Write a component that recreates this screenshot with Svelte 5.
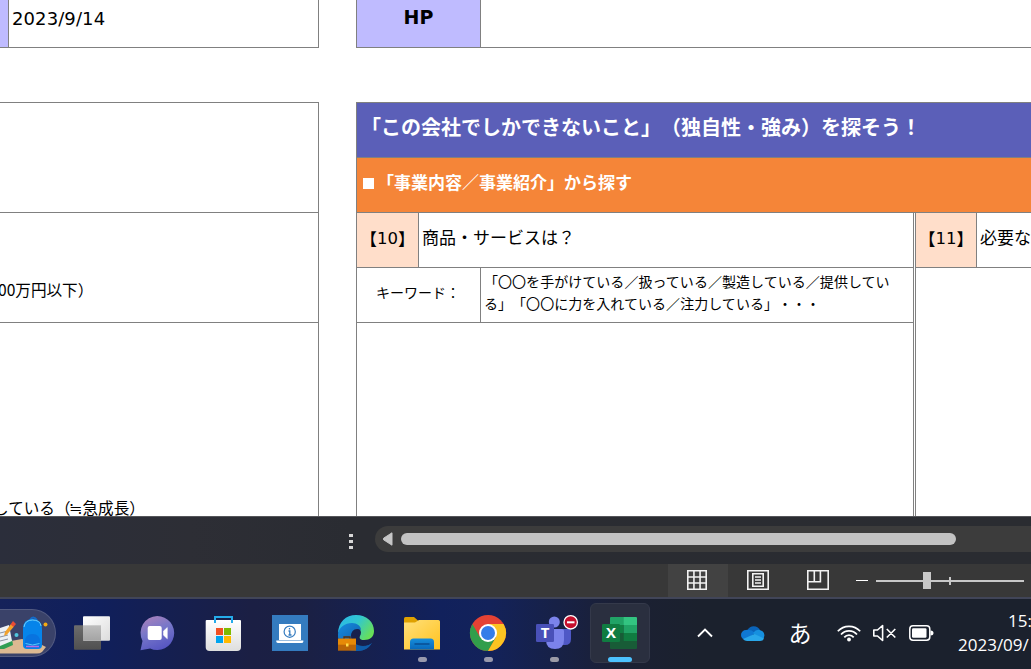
<script>
  const grid = [0, 1, 2, 3];
</script>

<div class="screen">
  <main class="sheet">
    <section class="left">
      <div class="date-row"><span class="swatch"></span><span class="date">2023/9/14</span></div>
      <div class="facts">
        <div class="fact short"></div>
        <div class="fact short"><span class="capital">00万円以下）</span></div>
        <div class="fact tall"><span class="growth">している（<i>≒</i>急成長）</span></div>
      </div>
    </section>
    <section class="right">
      <div class="hp-row"><b>HP</b></div>
      <div class="board">
        <h1>「この会社でしかできないこと」（独自性・強み）を探そう！</h1>
        <h2><span class="square"></span>「事業内容／事業紹介」から探す</h2>
        <div class="questions">
          <div class="question first">
            <div class="head"><span class="num">【<em>10</em>】</span><span class="ask">商品・サービスは？</span></div>
            <div class="keywords">
              <span class="label">キーワード：</span>
              <p>「〇〇を手がけている／扱っている／製造している／提供してい<br />る」「〇〇に力を入れている／注力している」・・・</p>
            </div>
          </div>
          <div class="question second">
            <div class="head"><span class="num">【<em>11</em>】</span><span class="ask">必要な</span></div>
          </div>
        </div>
      </div>
    </section>
  </main>

  <div class="scroll-strip">
    <span class="dots"><i></i><i></i><i></i></span>
    <div class="track">
      <svg width="10" height="14" viewBox="0 0 10 14"><path d="M9 .8v12.4L.6 7.8q-.8-.8 0-1.6z" fill="#c6c6c6" stroke="#c6c6c6" stroke-linejoin="round" /></svg>
      <span class="thumb"></span>
    </div>
  </div>

  <div class="status">
    <span class="view active">
      <svg width="20" height="20" viewBox="0 0 20 20" fill="none" stroke="#f2f2f2" stroke-width="1.600">
        {#each grid as n}
          <path d="M{0.8 + n * 6.13} 0v20M0 {0.8 + n * 6.13}h20" />
        {/each}
      </svg>
    </span>
    <span class="view">
      <svg width="22" height="20" viewBox="0 0 22 20" fill="none" stroke="#f2f2f2" stroke-width="1.600"><path d="M.8.8h20.400v18.400H.8zM5.800 3.800h10.400v12.400H5.800zM8 7h6M8 10h6M8 13h6" /></svg>
    </span>
    <span class="view">
      <svg width="22" height="20" viewBox="0 0 22 20" fill="none" stroke="#f2f2f2" stroke-width="1.600"><path d="M.8.8h20.400v18.400H.8zM7.300 1v10.500M13.400 1v10.800H1" /></svg>
    </span>
    <svg class="zoomer" width="175" height="20" viewBox="0 0 175 20"><path d="M0 10h12v1H0z" fill="#fff" /><path d="M20 10h148v2H20zM67 2h8v17h-8zM93 7h2v8h-2z" fill="#c8c8c8" /></svg>
  </div>

  <footer class="taskbar">
    <div class="pill">
      <svg width="56" height="48" viewBox="0 0 56 48">
        <path d="M0 34L22 30 40 35l6 3-4 5q-2 1.500-5 1.500H0z" fill="#dcb992" />
        <path d="M0 36l12-6 1 6-9 4H0z" fill="#2f9e55" />
        <path d="M0 19l9-3 3 16-12 5z" fill="#edf1f5" />
        <path d="M0 24l8-2M0 28l8-2M0 32l8-2" stroke="#8890a0" fill="none" />
        <path d="M4 27l1-4 6-8 3 2.500-7 8z" fill="#f2a22b" /><path d="M10.500 15.500l2.500-3.500 3 3-2.500 3z" fill="#e84c35" />
        <circle cx="16.500" cy="26" r="2" fill="#50c6df" /><circle cx="45.500" cy="15.500" r="2" fill="#f5aa11" />
        <path d="M30 11q3-5 7 0" fill="none" stroke="#146ac8" stroke-width="2" />
        <path d="M23 20q0-10 9.500-10t9.500 10v16q0 4-4 4H27q-4 0-4-4z" fill="#0684ea" />
        <path d="M24 18q1-7 8.500-7t8.500 6" fill="none" stroke="#70d1fa" />
        <path d="M25 33q0-8 7.500-8t7.500 8v4q0 2-3 2h-9q-3 0-3-2z" fill="#0873df" />
        <path d="M25.500 34.500q7 3 14 0" fill="none" stroke="#55c9fa" /><path d="M26 37.500h13" stroke="#b66de4" stroke-width="1.500" />
      </svg>
    </div>

    <nav class="apps">
      <svg class="slot" viewBox="0 0 60 60">
        <defs>
          <linearGradient id="tv" x2="1" y2="1"><stop stop-color="#fff" /><stop offset="1" stop-color="#dcdcdc" /></linearGradient>
          <linearGradient id="tg" x2="0" y2="1"><stop stop-color="#6c6c6c" /><stop offset="1" stop-color="#505050" /></linearGradient>
          <linearGradient id="to" x2="0" y2="1"><stop stop-color="#bdbdbd" /><stop offset="1" stop-color="#a4a4a4" /></linearGradient>
        </defs>
        <rect x="12" y="22.300" width="27" height="24.400" rx="1" fill="url(#tg)" />
        <rect x="21" y="13.300" width="27" height="24.400" rx="1" fill="url(#tv)" />
        <path d="M21 22.300h18v15.400H21z" fill="url(#to)" />
      </svg>
      <svg class="slot" viewBox="0 0 60 60">
        <defs><linearGradient id="ch" x1=".2" x2=".6" y2="1"><stop stop-color="#a880bb" /><stop offset=".45" stop-color="#7777c9" /><stop offset="1" stop-color="#5555c2" /></linearGradient></defs>
        <path d="M29.200 13a17 17 0 1 1-7 32.500L12.500 47.200l2-9.300A17 17 0 0 1 29.200 13z" fill="url(#ch)" />
        <rect x="19.700" y="23" width="14" height="14" rx="2" fill="#fff" /><path d="M35.500 28l3.800-3.500v11.300l-3.800-3.600z" fill="#fff" stroke="#fff" stroke-width=".5" stroke-linejoin="round" />
      </svg>
      <svg class="slot" viewBox="0 0 60 60">
        <defs><linearGradient id="st" x2="0" y2="1"><stop stop-color="#fff" /><stop offset="1" stop-color="#dedede" /></linearGradient></defs>
        <path d="M11.700 18q0-1 1-1H46q1 0 1 1v26q0 4-4 4H15.700q-4 0-4-4z" fill="url(#st)" />
        <path d="M21 20v-6h17v6" fill="none" stroke="#25aceb" stroke-width="2" />
        <path d="M22 25h7v7h-7z" fill="#f25022" /><path d="M30 25h7v7h-7z" fill="#7fba00" /><path d="M22 33h7v7h-7z" fill="#00a4ef" /><path d="M30 33h7v7h-7z" fill="#ffb900" />
      </svg>
      <svg class="slot" viewBox="0 0 60 60">
        <path d="M12 12h36v36H12z" fill="#347bbf" />
        <path d="M19 21h22v16H19z" fill="#fff" /><path d="M16.300 37.500h27v1q0 1.500-2 1.500h-23q-2 0-2-1.500z" fill="#fff" />
        <circle cx="29.700" cy="28.700" r="5.600" fill="none" stroke="#347bbf" stroke-width="1.200" />
        <path d="M28.500 28h1.300v4M28.500 32h3M29.500 25v1.500" stroke="#347bbf" stroke-width="1.300" fill="none" />
      </svg>
      <svg class="slot" viewBox="0 0 60 60">
        <defs>
          <linearGradient id="eg" y1=".1" y2=".6" x2="1"><stop stop-color="#2ab6ea" /><stop offset=".5" stop-color="#32c7cf" /><stop offset="1" stop-color="#68df58" /></linearGradient>
          <linearGradient id="eb" x2="1" y2="1"><stop stop-color="#168ce0" /><stop offset="1" stop-color="#0d4b93" /></linearGradient>
        </defs>
        <path d="M12 31C12 19 20 12 30 12c11 0 18 7 18 16 0 6-4 9-10 9-4 0-5-2-4-4 3-5-1-10-8-10-8 0-13 4-14 8z" fill="url(#eg)" />
        <path d="M12 31c1-7 7-11 14-11 5 0 9 3 9 7-6-3-10 1-10 6 0 6 6 10 12 10 4 0 7-1 9-3-4 6-9 8-16 8-11 0-19-7-18-17z" fill="url(#eb)" />
        <path d="M28 41q8 6 18-1-5 8-14 8h-3z" fill="#105ca9" />
        <path d="M18 36v-2h6v2" fill="none" stroke="#5b2f0b" stroke-width="1.300" />
        <path d="M12 35.700h18v12H12z" fill="#b96507" /><path d="M12 35.700h18v6H12z" fill="#e68a07" /><path d="M20 40.500h2.500v3H20z" fill="#ffdc48" />
      </svg>
      <svg class="slot" viewBox="0 0 60 60">
        <defs>
          <linearGradient id="fo" x2="1" y2="1"><stop stop-color="#ffe07b" /><stop offset="1" stop-color="#ffc21e" /></linearGradient>
          <linearGradient id="fb" x2="0" y2="1"><stop stop-color="#178edb" /><stop offset="1" stop-color="#0868bb" /></linearGradient>
        </defs>
        <path d="M12 15.500q0-1.500 1.500-1.500h8.500l4.500 4v4H12z" fill="#dfa100" />
        <path d="M12 19.500h11l4-2.500h19.500q1.500 0 1.500 1.500v28H12z" fill="url(#fo)" />
        <path d="M18 46.400V39q0-3.500 3.500-3.500h17Q42 35.500 42 39v7.400z" fill="url(#fb)" /><path d="M23 41h14" stroke="#084e93" stroke-width="1.500" stroke-linecap="round" />
        <rect x="26" y="54" width="9" height="5" rx="2.500" fill="#9899ad" />
      </svg>
      <svg class="slot" viewBox="0 0 60 60">
        <circle cx="30" cy="30" r="18" fill="#e44234" />
        <path d="M14.410 21A18 18 0 0 0 30 48L37.790 34.500 30 30 22.200 34.500z" fill="#319e4b" />
        <path d="M45.590 21A18 18 0 0 1 30 48L37.790 34.500 30 21z" fill="#fbc421" />
        <path d="M30 21h15.590L30 12z" fill="#e44234" />
        <circle cx="30" cy="30" r="9" fill="#fff" /><circle cx="30" cy="30" r="7" fill="#347de9" />
        <rect x="26" y="54" width="9" height="5" rx="2.500" fill="#9899ad" />
      </svg>
      <svg class="slot" viewBox="0 0 60 60">
        <path d="M36 26h9q2 0 2 2v8q0 6-6 6h-5z" fill="#4f58c6" />
        <circle cx="30.300" cy="19" r="5.500" fill="#7b83eb" />
        <path d="M22 26h16q2 0 2 2v9q0 9-9 9t-9-9z" fill="#7b83eb" />
        <rect x="12" y="21" width="18" height="18" rx="1.300" fill="#4950b8" />
        <text x="21" y="35.300" text-anchor="middle" class="logo">T</text>
        <circle cx="46.700" cy="19.300" r="6.700" fill="#c50f2c" stroke="#fff" stroke-width="1.300" /><path d="M43 19.300h7.500" stroke="#fff" stroke-width="2" />
        <rect x="26" y="54" width="9" height="5" rx="2.500" fill="#9b9ba7" />
      </svg>
      <svg class="slot" viewBox="0 0 60 60">
        <rect x=".5" y=".5" width="59" height="59" rx="5.500" fill="#2a2f3f" stroke="#34394a" />
        <path d="M20 15q0-1 1-1h13v8H20z" fill="#21a366" /><path d="M33.700 14H46q1 0 1 1v7H33.700z" fill="#33c481" />
        <path d="M20 22h13.700v8H20z" fill="#108043" /><path d="M33.700 22H47v8H33.700z" fill="#21a366" />
        <path d="M20 30h27v15q0 1-1 1H21q-1 0-1-1z" fill="#185c37" /><path d="M33.700 30H47v8H33.700z" fill="#107c41" />
        <rect x="12" y="21" width="18" height="18" rx="1.300" fill="#107c41" />
        <text x="21" y="35.300" text-anchor="middle" class="logo">X</text>
        <rect x="18" y="54" width="24" height="5" rx="2.500" fill="#4cc2ff" />
      </svg>
    </nav>

    <div class="tray">
      <svg width="16" height="10" viewBox="0 0 16 10"><path d="M1 8.500l7-7 7 7" fill="none" stroke="#fff" stroke-width="1.900" /></svg>
      <svg class="cloud" width="24" height="16" viewBox="0 0 24 16">
        <path d="M6.500 5A7 7 0 0 1 19 5l-5 5-8-2z" fill="#0a63b8" />
        <path d="M5 5q5-1 9 3l-8 7H5A5 5 0 0 1 5 5z" fill="#0f78d3" />
        <path d="M12 8q4-5 8-2.500A5 5 0 0 1 20 15z" fill="#1690df" />
        <path d="M2 14L13.500 9l9.500 4.500q-1 2.500-4 2.500H6q-2.500 0-4-2z" fill="#29a7ea" />
      </svg>
      <span class="ime">あ</span>
      <svg class="wifi" width="24" height="18" viewBox="0 0 24 18" fill="none" stroke="#fff" stroke-width="1.700"><path d="M.8 7.300a15 15 0 0 1 22.400 0M4 10.500a10.500 10.500 0 0 1 16 0M7.300 13.400a6 6 0 0 1 9.400 0" /><circle cx="12" cy="15.500" r="1.900" fill="#fff" stroke="none" /></svg>
      <svg class="sound" width="24" height="18" viewBox="0 0 24 18" fill="none" stroke="#fff" stroke-width="1.600"><path d="M.8 6h3.700L9.600 1.500v15L4.500 12H.8zM13.800 5l8.500 8.500M22.300 5l-8.500 8.500" stroke-linejoin="round" /></svg>
      <svg class="battery" width="25" height="16" viewBox="0 0 25 16"><rect x=".8" y=".8" width="20" height="14.400" rx="3.200" fill="none" stroke="#fff" stroke-width="1.500" /><rect x="3" y="3.200" width="14.500" height="9.600" rx="1.200" fill="#fff" /><path d="M21.500 5.500q3 0 3 2.500t-3 2.500z" fill="#fff" /></svg>
      <div class="clock"><span class="time">15:</span><span>2023/09/</span></div>
    </div>
  </footer>
</div>

<style>
  :global(body) { margin: 0; overflow: hidden; background: #fff; }
  * { box-sizing: border-box; }
  .screen { width: 1031px; height: 669px; display: flex; flex-direction: column; overflow: hidden; color: #000; font-family: "Noto Sans CJK JP", sans-serif; text-spacing-trim: space-all; white-space: nowrap; }
  .sheet { height: 516px; display: flex; gap: 37px; overflow: hidden; }
  .left { width: 319px; flex: none; display: flex; flex-direction: column; gap: 54px; }
  .right { flex: 1; min-width: 0; display: flex; flex-direction: column; gap: 54px; }
  .date-row { height: 48px; display: flex; border: solid #808080; border-width: 0 1px 1px 0; }
  .swatch { width: 9px; background: #bfbbff; border-right: 1px solid #808080; }
  .date { font: 18px/21px "DejaVu Sans", sans-serif; padding: 8px 0 0 3px; letter-spacing: .1px; }
  .facts { border: solid #808080; border-width: 1px 1px 0 0; height: 414px; overflow: hidden; font-size: 15.600px; line-height: 20px; }
  .fact { display: flex; overflow: hidden; }
  .short { height: 110px; border-bottom: 1px solid #808080; }
  .tall { height: 193px; }
  .capital { padding-top: 66px; margin-left: -2px; }
  .growth { padding-top: 174px; margin-left: -7px; }
  .growth i { display: inline-block; width: 12px; font-style: normal; text-indent: -2px; }
  .hp-row { height: 48px; border: solid #808080; border-width: 0 0 1px 1px; }
  .hp-row b { display: block; width: 124px; height: 47px; background: #bfbbff; border-right: 1px solid #808080; text-align: center; font: bold 19px/21px "DejaVu Sans", sans-serif; padding-top: 7px; }
  .board { height: 414px; border: solid #808080; border-width: 1px 0 0 1px; }
  h1, h2 { margin: 0; height: 55px; color: #fff; font-weight: 700; border-bottom: 1px solid #808080; }
  h1 { background: #5b5fb8; font-size: 20px; line-height: 24px; padding: 12px 0 0 4px; }
  h2 { background: #f58538; font-size: 17px; line-height: 22px; padding: 13px 0 0 6px; display: flex; }
  .square { width: 11px; height: 11px; background: #fff; margin: 7px 3px 0 0; }
  .questions { display: flex; gap: 1px; height: 303px; }
  .first { width: 557px; flex: none; border-right: 1px solid #808080; }
  .second { flex: 1; border-left: 1px solid #808080; }
  .head { display: flex; height: 55px; border-bottom: 1px solid #808080; font-size: 17px; }
  .num { width: 62px; flex: none; background: #ffdeca; border-right: 1px solid #808080; display: flex; justify-content: center; line-height: 24px; padding-top: 14px; }
  .second .num { width: 61px; }
  .num em { font: 16.500px/24px "DejaVu Sans", sans-serif; }
  .ask { line-height: 24px; padding: 12px 0 0 3px; }
  .keywords { display: flex; height: 55px; border-bottom: 1px solid #808080; font-size: 14px; }
  .label { width: 124px; border-right: 1px solid #808080; padding: 13px 0 0 19px; line-height: 22px; }
  p { margin: 0; padding: 2px 0 0 3px; line-height: 22px; letter-spacing: .04px; }

  .scroll-strip { height: 48px; border-top: 1px solid #55565a; background: linear-gradient(90deg, #2b2e3b, #2d2e35 190px, #2a2c32 350px, #2a2c31); display: flex; align-items: center; justify-content: flex-end; padding-bottom: 3px; }
  .dots { display: grid; gap: 3px; margin: 4px 22px 0 0; }
  .dots i { width: 4px; height: 3px; background: #d8d8d8; }
  .track { width: 656px; height: 26px; border-radius: 13px 0 0 13px; background: #3c3c3c; display: flex; align-items: center; padding-left: 8px; gap: 8px; }
  .thumb { width: 555px; height: 12px; border-radius: 6px; background: #c3c3c3; }
  .status { height: 33px; background: #383838; display: flex; align-items: center; padding-left: 668px; }
  .view { width: 60px; height: 33px; display: grid; place-items: start center; padding-top: 6px; flex: none; }
  .active { background: #424242; }
  .active svg { margin-right: 2px; }
  .zoomer { margin: 0 0 1px 8px; flex: none; }
  .taskbar { height: 72px; border-top: 2px solid #414558; background: linear-gradient(90deg, #15225a, #101f5b 100px, #1b1f44 250px, #1b2043 300px, #11215c 440px, #13225a 490px, #1b2034 620px, #1b212d 700px); display: flex; padding-top: 4px; }
  .pill { width: 56px; height: 48px; margin-top: 6px; border-radius: 0 24px 24px 0; overflow: hidden; background: #3a4269; border: solid #525a80; border-width: 1px 1px 1px 0; flex: none; }
  .pill svg { display: block; margin-top: -1px; }
  .apps { display: flex; gap: 6px; margin-left: 6px; flex: none; }
  .slot { width: 60px; height: 60px; flex: none; }
  .logo { fill: #fff; font: bold 15px "Open Sans", sans-serif; }
  .tray { display: flex; height: 60px; align-items: center; margin-left: 47px; color: #fff; }
  .tray svg { flex: none; }
  .cloud { margin-left: 28px; }
  .ime { width: 24px; margin: 0 25px 3px 23px; font-size: 23px; line-height: 24px; text-align: center; }
  .sound { margin: 0 12px; }
  .clock { width: 73px; flex: none; margin: 0 0 1px 24px; font: 17px/24px "Open Sans", sans-serif; display: flex; flex-direction: column; }
  .time { margin-left: 50px; }
</style>
